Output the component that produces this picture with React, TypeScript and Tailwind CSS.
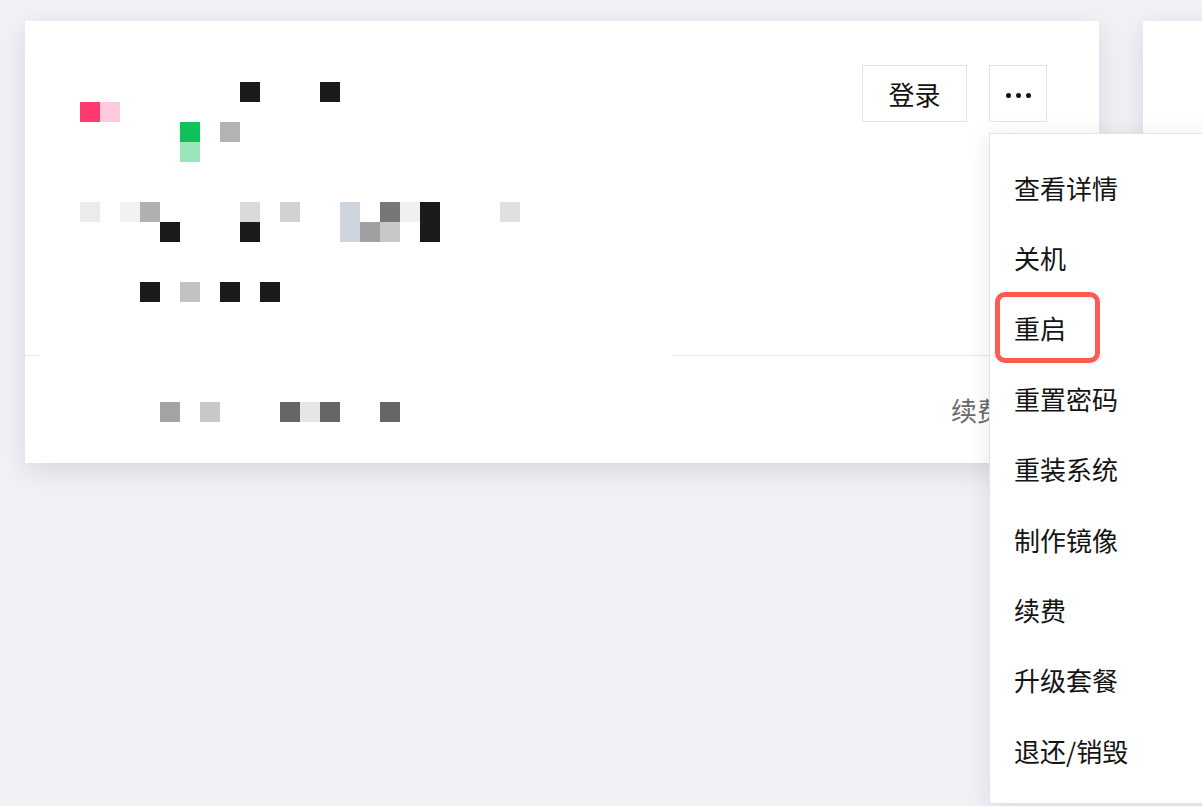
import React from 'react';

// pixelated (mosaic) block that hides the instance name / ip / specs
// coordinates are relative to the mosaic's top-left, 20px cells
const cells: [number, number, string, number?][] = [
  [200, 40, '#1b1b1b'],
  [280, 40, '#1b1b1b'],
  [40, 60, '#ff3a6e'],
  [60, 60, '#ffcadb'],
  [140, 80, '#10c05a'],
  [180, 80, '#b3b3b3'],
  [140, 100, '#99e5b8'],
  [40, 160, '#ebebeb'],
  [80, 160, '#f2f2f2'],
  [100, 160, '#b0b0b0'],
  [200, 160, '#dadada'],
  [240, 160, '#d2d2d2'],
  [300, 160, '#cfd5df', 40],
  [340, 160, '#777777'],
  [360, 160, '#f0f0f0'],
  [380, 160, '#1b1b1b', 40],
  [460, 160, '#e0e0e0'],
  [120, 180, '#1b1b1b'],
  [200, 180, '#1b1b1b'],
  [320, 180, '#a0a0a0'],
  [340, 180, '#c8c8c8'],
  [100, 240, '#1b1b1b'],
  [140, 240, '#c2c2c2'],
  [180, 240, '#1b1b1b'],
  [220, 240, '#1b1b1b'],
  [120, 360, '#a3a3a3'],
  [160, 360, '#c8c8c8'],
  [240, 360, '#666666'],
  [260, 360, '#e6e6e6'],
  [280, 360, '#666666'],
  [340, 360, '#666666'],
];

const menuItems = ['查看详情', '关机', '重启', '重置密码', '重装系统', '制作镜像', '续费', '升级套餐', '退还/销毁'];

function Mosaic() {
  return (
    <svg className="absolute left-[15px] top-[21px]" width="632" height="400" viewBox="0 0 632 400">
      <rect x="0" y="0" width="632" height="400" fill="#ffffff" />
      {cells.map(([x, y, c, h], i) => (
        <rect key={i} x={x} y={y} width="20" height={h ?? 20} fill={c} />
      ))}
    </svg>
  );
}

function InstanceCard() {
  return (
    <div className="relative w-[1074px] h-[442px] shrink-0 bg-white flex flex-col shadow-[0_8px_26px_rgba(20,30,60,0.12)]">
      <div className="h-[334px] flex justify-end items-start gap-[22px] pt-[44px] pr-[52px]">
        <button className="w-[105px] h-[57px] border border-[#e1e4ea] bg-white text-[26px] text-[#111] flex items-center justify-center">
          登录
        </button>
        <button className="w-[58px] h-[57px] border border-[#e1e4ea] bg-white flex items-center justify-center gap-[5px] pt-[4px]">
          <span className="w-[5px] h-[5px] rounded-full bg-[#111]" />
          <span className="w-[5px] h-[5px] rounded-full bg-[#111]" />
          <span className="w-[5px] h-[5px] rounded-full bg-[#111]" />
        </button>
      </div>
      <div className="h-px bg-[#e5e7ec]" />
      <div className="flex-1 flex items-center justify-end pr-[96px]">
        <span className="text-[26px] text-[#6b6b6b]">续费</span>
      </div>
      <Mosaic />
    </div>
  );
}

function ActionMenu() {
  return (
    <div className="absolute left-[989px] top-[133px] w-[260px] h-[671px] bg-white border border-[#e1e4ea] shadow-[0_6px_24px_rgba(20,30,60,0.1)] py-[18px]">
      {menuItems.map((item) => (
        <div key={item} className="h-[70.4px] flex items-center pl-[24px] text-[26px] text-[#141414]">
          {item}
        </div>
      ))}
    </div>
  );
}

export default function App() {
  return (
    <div
      className="relative w-[1202px] h-[806px] overflow-hidden bg-[#f1f2f6]"
      style={{ fontFamily: '"Noto Sans CJK SC", "Noto Sans", sans-serif' }}
    >
      <div className="flex gap-[44px] pt-[21px] pl-[25px]">
        <InstanceCard />
        <div className="w-[200px] h-[442px] shrink-0 bg-white shadow-[0_8px_26px_rgba(20,30,60,0.12)]" />
      </div>
      <ActionMenu />
      {/* highlight annotation around 重启 */}
      <div className="absolute left-[995px] top-[292px] w-[105px] h-[71px] border-[5px] border-[#fe5a4f] rounded-[10px]" />
    </div>
  );
}
